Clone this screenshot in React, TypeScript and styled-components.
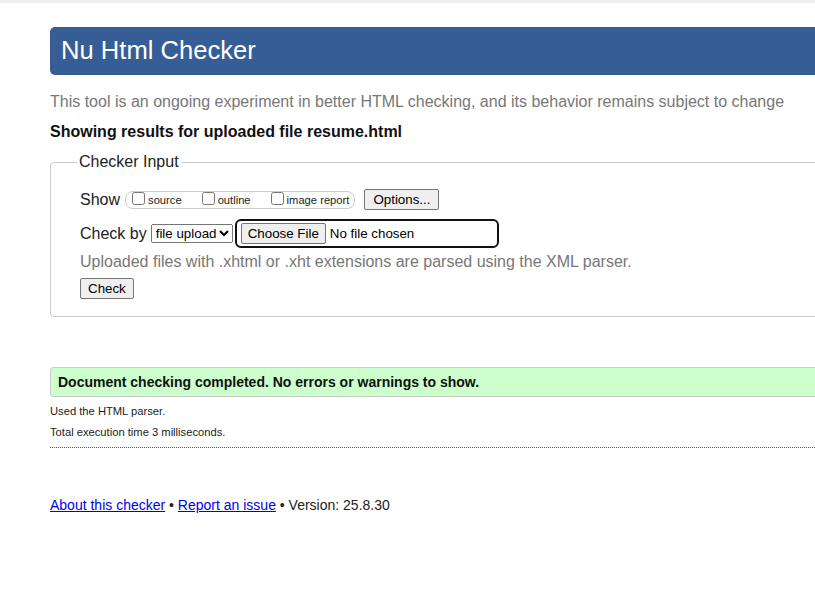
import React from 'react';
import styled, { createGlobalStyle } from 'styled-components';

const GlobalStyle = createGlobalStyle`
  html, body {
    margin: 0;
    overflow: hidden;
    background: #fff;
  }
  body {
    border-top: 3px solid #f0f0f0;
    font-family: 'Liberation Sans', Arial, sans-serif;
    color: #222;
  }
`;

const Page = styled.div`
  margin-left: 50px;
  margin-right: -40px;
  padding-top: 24px;
`;

const Banner = styled.header`
  display: flex;
  align-items: center;
  height: 48px;
  padding: 0 11px;
  background: #365d95;
  border-radius: 5px;
`;

const Title = styled.h1`
  margin: 0 0 1px;
  font-size: 25.6px;
  font-weight: normal;
  color: #fff;
`;

const Intro = styled.p`
  margin: 18px 0 0;
  font-size: 16px;
  color: #777;
`;

const Heading = styled.p`
  margin: 12px 0 0;
  font-size: 16px;
  font-weight: bold;
  color: #111;
`;

const Fieldset = styled.fieldset`
  margin: 12px 0 0;
  padding: 0 0 17px 29px;
  border: 1px solid #ccc;
  border-radius: 4px;
`;

const Legend = styled.legend`
  margin-left: -3px;
  padding: 0 2px;
  font-size: 16px;
  color: #222;
`;

const Row = styled.div<{ $top: number }>`
  display: flex;
  align-items: center;
  margin-top: ${p => p.$top}px;
  font-size: 16px;
`;

const Group = styled.div`
  display: inline-flex;
  align-items: flex-start;
  height: 18px;
  box-sizing: border-box;
  margin-left: 5px;
  padding: 0 5px 0 2px;
  border: 1px solid #ccc;
  border-radius: 8px;
`;

const Option = styled.label`
  display: flex;
  align-items: flex-start;
  margin-right: 16px;
  font-size: 11.2px;
  &:last-child {
    margin-right: 0;
  }
  input {
    width: 13px;
    height: 13px;
    margin: 0 3px 0 4px;
  }
  span {
    padding-top: 2px;
  }
`;

const Button = styled.button<{ $gap?: number; $pad?: number }>`
  height: 21px;
  margin-left: ${p => p.$gap ?? 0}px;
  padding: 1px ${p => p.$pad ?? 6}px;
  border: 1px solid #767676;
  border-radius: 2px;
  background: #efefef;
  font-family: 'Liberation Sans', Arial, sans-serif;
  font-size: 13.33px;
  color: #000;
`;

const Select = styled.select`
  width: 82px;
  height: 19px;
  margin-left: 4px;
  font-family: 'Liberation Sans', Arial, sans-serif;
  font-size: 13.33px;
  color: #000;
`;

const FileBox = styled.div`
  display: flex;
  align-items: center;
  width: 264px;
  box-sizing: border-box;
  margin-left: 2px;
  padding: 2px 4px;
  border: 2px solid #111;
  border-radius: 6px;
  font-size: 13.33px;
  color: #000;
`;

const FileName = styled.span`
  margin-left: 4px;
`;

const Hint = styled.p`
  margin: 5px 0 0;
  font-size: 16px;
  color: #777;
`;

const Success = styled.div`
  margin-top: 50px;
  padding: 6px 7px;
  border: 1px solid #ccc;
  border-radius: 3px;
  background: #ccffcc;
  font-size: 14px;
  font-weight: bold;
  color: #111;
`;

const Note = styled.p`
  margin: 7px 0 0;
  font-size: 11.2px;
  line-height: 14px;
`;

const Rule = styled.div`
  margin-top: 8px;
  border-top: 1px dotted #555;
`;

const Footer = styled.p`
  margin: 49px 0 0;
  font-size: 14px;
  a {
    color: #0000ee;
  }
`;

export default function App(): React.ReactElement {
  return (
    <Page>
      <GlobalStyle />
      <Banner>
        <Title>Nu Html Checker</Title>
      </Banner>
      <Intro>
        This tool is an ongoing experiment in better HTML checking, and its behavior remains subject to change
      </Intro>
      <Heading>Showing results for uploaded file resume.html</Heading>
      <Fieldset>
        <Legend>Checker Input</Legend>
        <Row $top={18}>
          Show
          <Group>
            <Option>
              <input type="checkbox" />
              <span>source</span>
            </Option>
            <Option>
              <input type="checkbox" />
              <span>outline</span>
            </Option>
            <Option>
              <input type="checkbox" />
              <span>image report</span>
            </Option>
          </Group>
          <Button $gap={9} $pad={8}>Options...</Button>
        </Row>
        <Row $top={9}>
          Check by
          <Select defaultValue="file">
            <option value="address">address</option>
            <option value="file">file upload</option>
            <option value="text">text input</option>
          </Select>
          <FileBox>
            <Button>Choose File</Button>
            <FileName>No file chosen</FileName>
          </FileBox>
        </Row>
        <Hint>Uploaded files with .xhtml or .xht extensions are parsed using the XML parser.</Hint>
        <Row $top={7}>
          <Button $pad={7}>Check</Button>
        </Row>
      </Fieldset>
      <Success>Document checking completed. No errors or warnings to show.</Success>
      <Note>Used the HTML parser.</Note>
      <Note>Total execution time 3 milliseconds.</Note>
      <Rule />
      <Footer>
        <a href="#about">About this checker</a> • <a href="#issue">Report an issue</a> • Version: 25.8.30
      </Footer>
    </Page>
  );
}
